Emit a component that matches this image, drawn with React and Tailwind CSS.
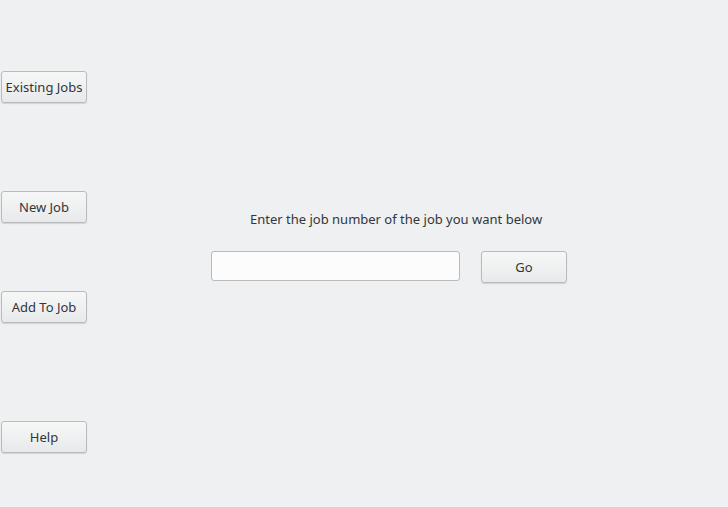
import React from 'react'

const btn =
  'w-[86px] h-[32px] pt-[2px] rounded-[3px] border border-[#b8babc] bg-gradient-to-b from-[#f7f7f7] to-[#e8e9ea] text-[#31363b] text-[13px] shadow-[0_1px_1px_rgba(0,0,0,0.12)]'

export default function App() {
  return (
    <div
      className="w-[728px] h-[507px] bg-[#eff0f1] flex overflow-hidden text-[#31363b]"
      style={{ fontFamily: '"Noto Sans", "Open Sans", sans-serif' }}
    >
      {/* Side buttons */}
      <div className="flex flex-col pl-[1px] pt-[71px]">
        <button className={btn}>Existing Jobs</button>
        <button className={btn + ' mt-[88px]'}>New Job</button>
        <button className={btn + ' mt-[68px]'}>Add To Job</button>
        <button className={btn + ' mt-[98px]'}>Help</button>
      </div>

      {/* Main area */}
      <div className="flex flex-col pt-[210px] pl-[124px]">
        <p className="text-[13px] leading-[18px] ml-[39px]">Enter the job number of the job you want below</p>
        <div className="flex items-start gap-[21px] mt-[23px]">
          <input
            className="w-[249px] h-[30px] rounded-[3px] border border-[#b8babc] bg-[#fcfcfc] outline-none px-2 text-[13px]"
          />
          <button className={btn}>Go</button>
        </div>
      </div>
    </div>
  )
}
